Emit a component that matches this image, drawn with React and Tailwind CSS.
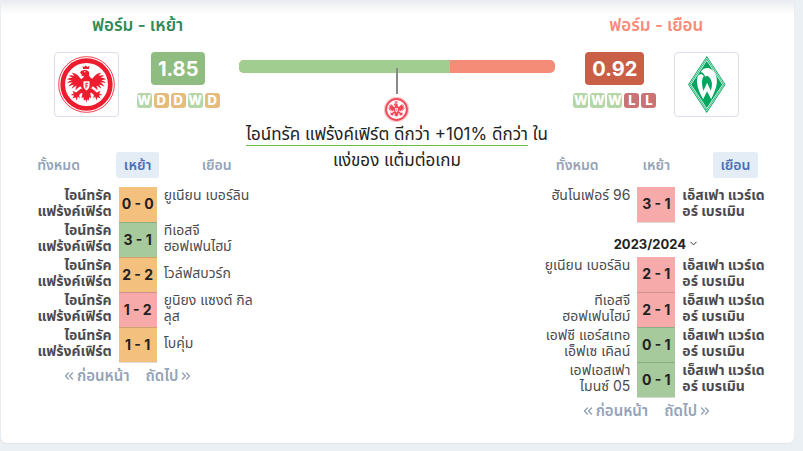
import { ChevronDown, ChevronsLeft, ChevronsRight } from 'lucide-react'
import clsx from 'clsx'

const resultColors = {
    W: 'bg-[#a6ca9c]',
    D: 'bg-[#f4c07e]',
    L: 'bg-[#f6aaa9]',
}

const chipColors = {
    W: 'bg-[#b5d6a7]',
    D: 'bg-[#e6bc7c]',
    L: 'bg-[#c97374]',
}

const tabs = ['ทั้งหมด', 'เหย้า', 'เยือน']

const frankfurt = ['ไอน์ทรัค', 'แฟร้งค์เฟิร์ต']
const bremen = ['เอ็สเฟา แวร์เด', 'อร์ เบรเมิน']

const homeMatches = [
    { home: frankfurt, score: '0 - 0', away: ['ยูเนียน เบอร์ลิน', ''], result: 'D' },
    { home: frankfurt, score: '3 - 1', away: ['ทีเอสจี', 'ฮอฟเฟนไฮม์'], result: 'W' },
    { home: frankfurt, score: '2 - 2', away: ['โวล์ฟสบวร์ก'], result: 'D' },
    { home: frankfurt, score: '1 - 2', away: ['ยูนิยง แซงต์ กิล', 'ลุส'], result: 'L' },
    { home: frankfurt, score: '1 - 1', away: ['โบคุ่ม'], result: 'D' },
]

const awayMatches = [
    { home: ['ฮันโนเฟอร์ 96', ''], score: '3 - 1', away: bremen, result: 'L' },
    { season: '2023/2024' },
    { home: ['ยูเนียน เบอร์ลิน', ''], score: '2 - 1', away: bremen, result: 'L' },
    { home: ['ทีเอสจี', 'ฮอฟเฟนไฮม์'], score: '2 - 1', away: bremen, result: 'L' },
    { home: ['เอฟซี แอร์สเทอ', 'เอ็ฟเซ เคิลน์'], score: '0 - 1', away: bremen, result: 'W' },
    { home: ['เอฟเอสเฟา', 'ไมนซ์ 05'], score: '0 - 1', away: bremen, result: 'W' },
]

function EagleCrest({ className }) {
    return (
        <svg viewBox="0 0 170 170" className={className} aria-hidden="true">
            <circle cx="85" cy="85" r="83" fill="#fff" stroke="#ed1c2e" strokeWidth="2.5" />
            <circle cx="85" cy="85" r="71" fill="none" stroke="#ed1c2e" strokeWidth="14" />
            <g fill="#ed1c2e">
                <path d="M73 29l5 4 5-5 5 5 6-4-2 10H75z" />
                <path d="M66 49c3-6 10-8 17-7 8 1 11 6 10 12-1 5 1 8 5 11l8 8-21 12-20-12c6-6 12-8 13-14-4 0-6 2-9 1 2-2 3-3 2-5-2-1-4-3-5-6z" />
                <path d="M71 70c-6-3-8-10-14-14-4-3-9-6-15-6 2 4 5 6 7 9-6-2-11-3-17 0 4 2 8 3 11 6-6-1-12 1-17 5 6 0 10 1 15 2-6 1-11 4-14 9 6-2 11-2 17-2-6 3-10 6-12 12 6-3 11-5 17-6-4 3-7 8-8 13 5-4 9-7 15-9-3 4-4 8-3 13 5-6 9-9 16-13z" />
                <path d="M99 70c6-3 8-10 14-14 4-3 9-6 15-6-2 4-5 6-7 9 6-2 11-3 17 0-4 2-8 3-11 6 6-1 12 1 17 5-6 0-10 1-15 2 6 1 11 4 14 9-6-2-11-2-17-2 6 3 10 6 12 12-6-3-11-5-17-6 4 3 7 8 8 13-5-4-9-7-15-9 3 4 4 8 3 13-5-6-9-9-16-13z" />
                <path d="M67 72h36v20L90 105h-10L67 92z" />
                <path d="M75 97l10 8 10-8 6 12-5 2 3 14-6-2-1 10-5-3-2 9-3-9-5 3-1-10-6 2 3-14-5-2z" />
                <path d="M70 96l8 6-15 14 2 11-6-6-3 12-4-10-9 4 5-9-11-2 10-4-4-8 11 5z" />
                <path d="M100 96l-8 6 15 14-2 11 6-6 3 12 4-10 9 4-5-9 11-2-10-4 4-8-11 5z" />
            </g>
            <path d="M76 75h18v14c0 7-4 11-9 14-5-3-9-7-9-14z" fill="#fff" />
            <path d="M82 80h8v3h-5v4h4v3h-4v6h-3z" fill="#ed1c2e" />
            <circle cx="80" cy="47" r="2" fill="#fff" />
        </svg>
    )
}

function DiamondCrest({ className }) {
    return (
        <svg viewBox="0 0 112 170" className={className} aria-hidden="true">
            <path d="M56 0l56 85-56 85L0 85z" fill="#00a65e" />
            <path d="M56 6l52 79-52 79L4 85z" fill="none" stroke="#fff" strokeWidth="2" />
            <path d="M56 13l47.500 72-47.500 72L8.500 85z" fill="none" stroke="#fff" strokeWidth="2.500" />
            <path
                d="M28 64C28 54 42 50 47 60C41 68 40 84 46 104L57 80L68 104C73 88 73 74 64 64C58 58 54 60 51 62C49 54 45 49 38 48C42 38 54 34 64 37C79 42 88 60 86 80C85 96 77 112 69 129L57 105L45 129C36 112 28 98 27 80C26 74 27 69 28 64Z"
                fill="#fff"
            />
        </svg>
    )
}

function FormSummary({ value, valueClass, chips }) {
    return (
        <div className="flex flex-col items-center gap-2">
            <span className={clsx('flex h-[33px] items-center rounded px-[7px] text-xl font-bold text-white', valueClass)}>{value}</span>
            <div className="flex gap-0.5">
                {chips.map((chip, i) => (
                    <span
                        key={i}
                        className={clsx('flex h-[15px] w-[15px] items-center justify-center rounded-[3px] text-[13px] font-extrabold text-white', chipColors[chip])}
                    >
                        {chip}
                    </span>
                ))}
            </div>
        </div>
    )
}

function CrestBox({ children }) {
    return (
        <div className="flex size-[65px] items-center justify-center rounded border border-[#dcdee8]">
            {children}
        </div>
    )
}

function Tabs({ active }) {
    return (
        <div className="mt-[35px] grid grid-cols-3 justify-items-center">
            {tabs.map((tab) => (
                <button
                    key={tab}
                    type="button"
                    className={clsx(
                        'h-[26px] rounded-[3px] px-2 text-sm font-semibold whitespace-nowrap',
                        tab === active ? 'bg-[#e4ecf6] text-[#4a72b8]' : 'text-[#94a3b8]'
                    )}
                >
                    {tab}
                </button>
            ))}
        </div>
    )
}

function TeamName({ lines }) {
    return lines.map((line, i) => (
        <span key={i} className="block h-4 whitespace-nowrap">{line}</span>
    ))
}

function MatchTable({ matches, side }) {
    return (
        <table className="mt-[9px] w-full table-fixed text-sm leading-4 text-[#4b4b4f]">
            <colgroup>
                <col />
                <col className="w-[38px]" />
                <col />
            </colgroup>
            <tbody>
                {matches.map((match, i) =>
                    match.season ? (
                        <tr key={i} className="h-[35px]">
                            <td colSpan={3} className="pt-2 text-center">
                                <button type="button" className="inline-flex items-center gap-0.5 text-[13px] font-bold text-[#222]">
                                    {match.season}
                                    <ChevronDown size={11} />
                                </button>
                            </td>
                        </tr>
                    ) : (
                        <tr key={i} className="h-[35px]">
                            <td className={clsx('pr-[7px] pb-[3px] text-right', side === 'home' && 'font-bold')}>
                                <TeamName lines={match.home} />
                            </td>
                            <td className={clsx('border-b border-b-black/15 text-center font-bold whitespace-nowrap text-[#222]', resultColors[match.result])}>
                                {match.score}
                            </td>
                            <td className={clsx('pb-[3px] pl-[7px]', side === 'away' && 'font-bold')}>
                                <TeamName lines={match.away} />
                            </td>
                        </tr>
                    )
                )}
            </tbody>
        </table>
    )
}

function Pager() {
    return (
        <div className="mt-0.5 flex justify-center gap-4 pr-5 text-[15px] leading-[22px] font-semibold text-[#94a3b8]">
            <button type="button" className="flex items-center gap-px">
                <ChevronsLeft size={14} strokeWidth={2.5} />
                ก่อนหน้า
            </button>
            <button type="button" className="flex items-center gap-px">
                ถัดไป
                <ChevronsRight size={14} strokeWidth={2.5} />
            </button>
        </div>
    )
}

export default function App() {
    return (
        <div className="min-h-screen bg-[#ebf0f4] pr-[9px] pb-2 pl-px font-['Inter','Noto_Sans_Thai',sans-serif]">
            <main className="grid grid-cols-[237fr_281fr_237fr] rounded-b-md bg-white bg-linear-to-b from-[#e8ebef] to-white to-[14px] pr-[19px] pb-[21px] pl-[18px] shadow-xs">
                <section>
                    <h2 className="pt-[13px] text-center text-[17px] leading-6 font-semibold text-[#2e8b57]">ฟอร์ม - เหย้า</h2>
                    <div className="mt-[15px] flex justify-center gap-[18px] pr-0.5">
                        <CrestBox>
                            <EagleCrest className="size-[57px]" />
                        </CrestBox>
                        <FormSummary value="1.85" valueClass="bg-[#8fbc80]" chips={['W', 'D', 'D', 'W', 'D']} />
                    </div>
                    <Tabs active="เหย้า" />
                    <MatchTable matches={homeMatches} side="home" />
                    <Pager />
                </section>

                <section className="-mx-[17px] pt-[60px] text-center">
                    <div className="flex h-[13px] overflow-hidden rounded-[5px] bg-[#f48c78]">
                        <div className="w-2/3 bg-[#a2cd91]" />
                    </div>
                    <div className="relative mx-auto -mt-[5px] h-[26px] w-0.5 bg-[#888]" />
                    <EagleCrest className="mx-auto mt-[3px] size-[25px] opacity-80" />
                    <p className="-mt-px text-[17px] leading-[26px] text-[#222]">
                        <span className="underline decoration-[#6cba3c] decoration-1 underline-offset-[5px] [text-decoration-skip-ink:none]">ไอน์ทรัค แฟร้งค์เฟิร์ต ดีกว่า +101% ดีกว่า</span> ใน<br />แง่ของ แต้มต่อเกม
                    </p>
                </section>

                <section>
                    <h2 className="pt-[13px] text-center text-[17px] leading-6 font-semibold text-[#f98b78]">ฟอร์ม - เยือน</h2>
                    <div className="mt-[15px] flex justify-center gap-[18px]">
                        <FormSummary value="0.92" valueClass="bg-[#c95f47]" chips={['W', 'W', 'W', 'L', 'L']} />
                        <CrestBox>
                            <DiamondCrest className="h-[57px]" />
                        </CrestBox>
                    </div>
                    <Tabs active="เยือน" />
                    <MatchTable matches={awayMatches} side="away" />
                    <Pager />
                </section>
            </main>
        </div>
    )
}
